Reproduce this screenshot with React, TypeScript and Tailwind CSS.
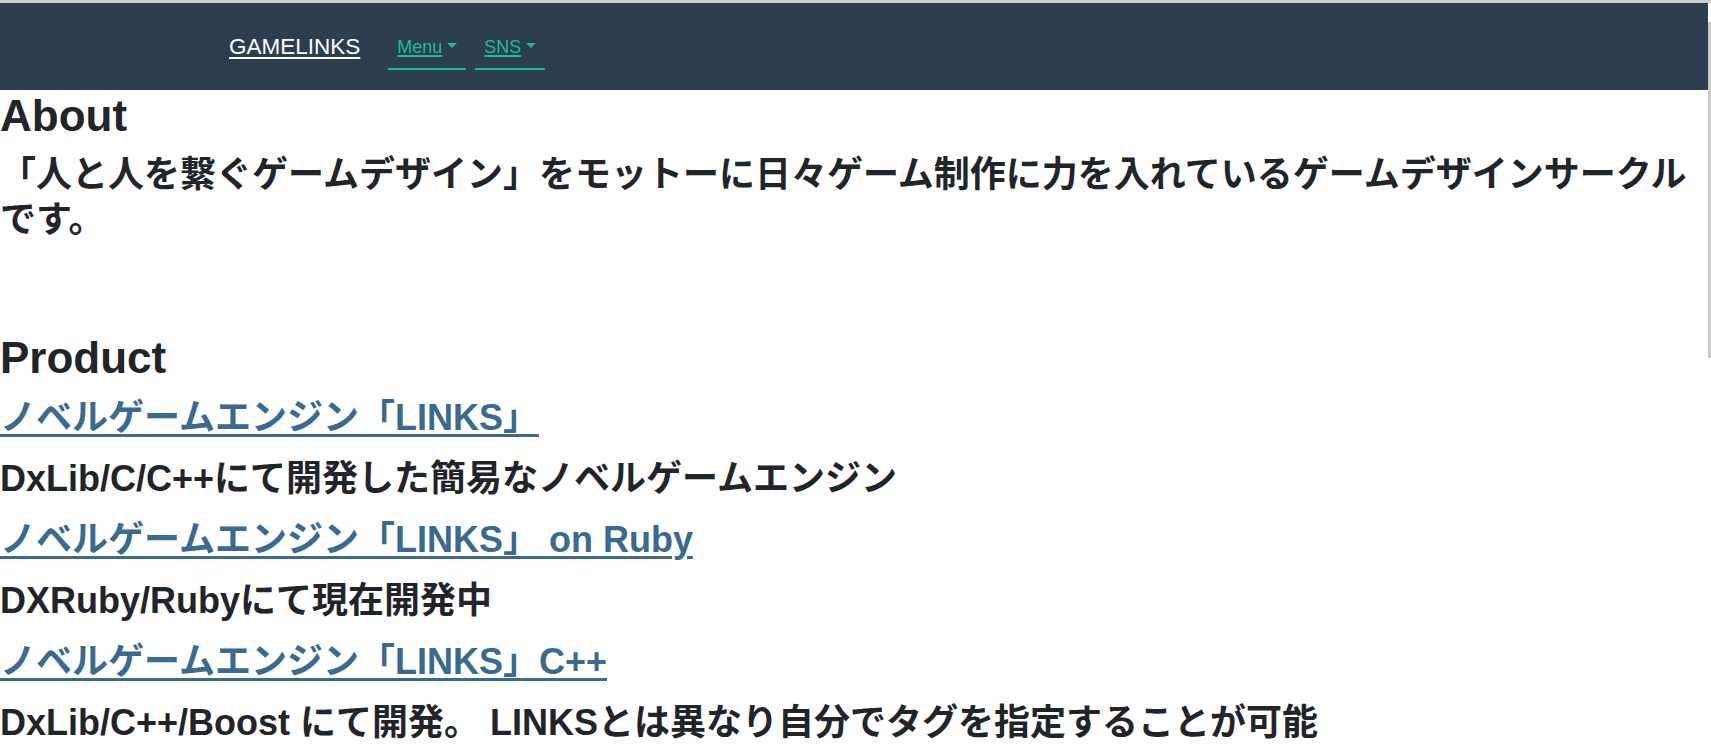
import React from "react";

const font = "font-['Liberation_Sans','Noto_Sans_CJK_JP',sans-serif]";

function Caret() {
  return (
    <span className="ml-[5px] mt-[6px] inline-block h-0 w-0 border-l-[5px] border-r-[5px] border-t-[5px] border-l-transparent border-r-transparent border-t-[#18bc9c]" />
  );
}

export default function App() {
  return (
    <div className={`relative min-h-screen bg-white ${font}`}>
      <div className="h-[3px] w-full bg-[#cdcdcd]" />
      <nav className="flex h-[87px] w-[1708px] items-start bg-[#2c3e50] pl-[229px]">
        <a href="#" className="mt-[31px] text-[22.5px] leading-[25px] text-white underline decoration-[2px] underline-offset-[3px]">
          GAMELINKS
        </a>
        <ul className="ml-[28px] mt-[34px] flex gap-[9px]">
          <li className="flex items-start border-b-2 border-[#18bc9c] px-[9px] pb-[10px]">
            <a href="#" className="text-[18px] leading-[21px] text-[#18bc9c] underline decoration-[2px] underline-offset-[2px]">
              Menu
            </a>
            <Caret />
          </li>
          <li className="flex items-start border-b-2 border-[#18bc9c] px-[9px] pb-[10px]">
            <a href="#" className="text-[18px] leading-[21px] text-[#18bc9c] underline decoration-[2px] underline-offset-[2px]">
              SNS
            </a>
            <Caret />
          </li>
        </ul>
      </nav>

      <main className="text-[#212529]">
        <h2 className="mb-[9px] text-[44px] font-bold leading-[1.2]">About</h2>
        <p className="text-[36px] font-bold leading-[45px]">
          「人と人を繋ぐゲームデザイン」をモットーに日々ゲーム制作に力を入れているゲームデザインサークルです。
        </p>

        <h2 className="mb-[11px] mt-[90px] text-[44px] font-bold leading-[1.2]">Product</h2>
        <div className="flex flex-col">
          <h3 className="mb-[18px] text-[36px] font-bold leading-[43px]">
            <a href="#" className="text-[#3a6a8f] underline decoration-[3px] underline-offset-[4px]">
              ノベルゲームエンジン「LINKS」
            </a>
          </h3>
          <h3 className="mb-[18px] text-[36px] font-bold leading-[43px]">
            DxLib/C/C++にて開発した簡易なノベルゲームエンジン
          </h3>
          <h3 className="mb-[18px] text-[36px] font-bold leading-[43px]">
            <a href="#" className="text-[#3a6a8f] underline decoration-[3px] underline-offset-[4px]">
              ノベルゲームエンジン「LINKS」 on Ruby
            </a>
          </h3>
          <h3 className="mb-[18px] text-[36px] font-bold leading-[43px]">DXRuby/Rubyにて現在開発中</h3>
          <h3 className="mb-[18px] text-[36px] font-bold leading-[43px]">
            <a href="#" className="text-[#3a6a8f] underline decoration-[3px] underline-offset-[4px]">
              ノベルゲームエンジン「LINKS」C++
            </a>
          </h3>
          <h3 className="mb-[18px] text-[36px] font-bold leading-[43px]">
            DxLib/C++/Boost にて開発。 LINKSとは異なり自分でタグを指定することが可能
          </h3>
        </div>
      </main>

      <div className="absolute right-0 top-[22px] h-[336px] w-[3px] bg-[#c9c9c9]" />
    </div>
  );
}
